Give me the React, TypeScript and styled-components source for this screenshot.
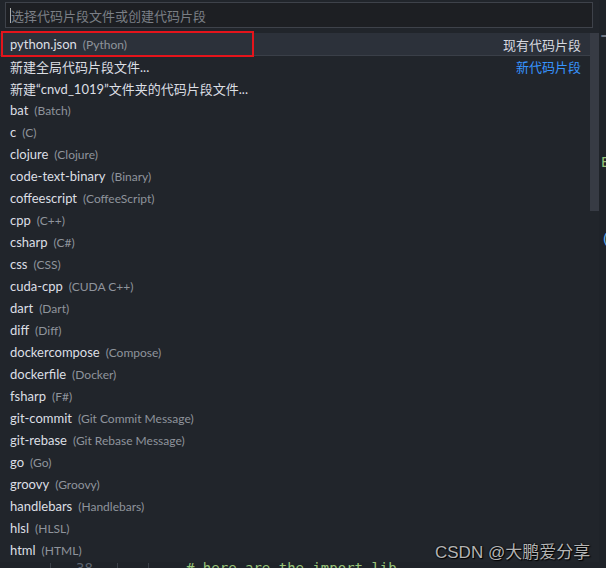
import React from "react";
import styled, { createGlobalStyle } from "styled-components";

const Global = createGlobalStyle`
  html, body { margin: 0; padding: 0; background: #1f2329; overflow: hidden; }
  #root { width: 606px; height: 568px; }
`;

const FONT = `"Segoe UI", Lato, "Noto Sans CJK SC", sans-serif`;

const Page = styled.div`
  position: relative;
  width: 606px;
  height: 568px;
  background: #1f2329;
  overflow: hidden;
  font-family: ${FONT};
`;

const Editor = styled.div`
  position: absolute;
  inset: 0;
  font-family: "DejaVu Sans Mono", monospace;
  font-size: 14px;
`;

const Frag = styled.span<{ $c: string }>`
  position: absolute;
  color: ${(p) => p.$c};
  white-space: pre;
`;

const Guide = styled.span`
  position: absolute;
  top: 563px;
  width: 1px;
  height: 6px;
  background: #3b4048;
`;

const Panel = styled.div`
  position: absolute;
  left: 0;
  top: 0;
  width: 599px;
  height: 562px;
  background: #21252b;
  display: flex;
  flex-direction: column;
  box-sizing: border-box;
  padding-top: 2px;
`;

const InputBox = styled.div`
  margin: 0 6px 0 5px;
  height: 26px;
  box-sizing: border-box;
  border: 1px solid #3e424a;
  background: #1d1f23;
  display: flex;
  align-items: center;
  padding-left: 4px;
  color: #7b7f86;
  font-size: 13px;
  font-family: "Noto Sans CJK SC", sans-serif;
`;

const Caret = styled.span`
  width: 1px;
  height: 15px;
  background: #aeafad;
`;

const ListArea = styled.div`
  margin-top: 5px;
  display: flex;
  flex: 1;
  min-height: 0;
`;

const Rows = styled.div`
  width: 590px;
  display: flex;
  flex-direction: column;
`;

const Row = styled.div<{ $active?: boolean; $sep?: boolean }>`
  height: 22px;
  flex: none;
  display: flex;
  align-items: center;
  padding: 0 9px 0 10px;
  box-sizing: border-box;
  background: ${(p) => (p.$active ? "#2c313a" : "transparent")};
  box-shadow: ${(p) => (p.$sep ? "inset 0 1px 0 #3a3f48" : "none")};
  font-size: 13px;
  color: #d7dae0;
  white-space: nowrap;
`;

const Label = styled.span`
  color: #dcdfe4;
`;

const Desc = styled.span`
  margin-left: 6px;
  font-size: 12px;
  color: #8f949c;
`;

const Tag = styled.span<{ $blue?: boolean }>`
  margin-left: auto;
  font-family: "Noto Sans CJK SC", sans-serif;
  font-size: 13px;
  color: ${(p) => (p.$blue ? "#3794ff" : "#d7dae0")};
`;

const Track = styled.div`
  width: 9px;
  display: flex;
  flex-direction: column;
`;

const Thumb = styled.div`
  height: 178px;
  background: #373b44;
`;

const RedBox = styled.div`
  position: absolute;
  left: 1px;
  top: 31px;
  width: 253px;
  height: 26px;
  box-sizing: border-box;
  border: 2px solid #e5141b;
  pointer-events: none;
`;

const Watermark = styled.div`
  position: absolute;
  left: 435px;
  top: 538px;
  font-family: "Liberation Sans", "Noto Sans CJK SC", sans-serif;
  font-size: 17px;
  color: #b4b4b4;
  text-shadow: 0 0 2px #000, 1px 1px 1px #000;
`;

const langs: [string, string][] = [
  ["bat", "Batch"],
  ["c", "C"],
  ["clojure", "Clojure"],
  ["code-text-binary", "Binary"],
  ["coffeescript", "CoffeeScript"],
  ["cpp", "C++"],
  ["csharp", "C#"],
  ["css", "CSS"],
  ["cuda-cpp", "CUDA C++"],
  ["dart", "Dart"],
  ["diff", "Diff"],
  ["dockercompose", "Compose"],
  ["dockerfile", "Docker"],
  ["fsharp", "F#"],
  ["git-commit", "Git Commit Message"],
  ["git-rebase", "Git Rebase Message"],
  ["go", "Go"],
  ["groovy", "Groovy"],
  ["handlebars", "Handlebars"],
  ["hlsl", "HLSL"],
  ["html", "HTML"],
];

export default function App() {
  return (
    <Page>
      <Global />
      <Editor>
        <Frag $c="#abb2bf" style={{ left: 601, top: 33 }}>下</Frag>
        <Frag $c="#98c379" style={{ left: 601, top: 154 }}>E</Frag>
        <Frag $c="#61afef" style={{ left: 601, top: 231 }}>(</Frag>
        <Guide style={{ left: 50 }} />
        <Guide style={{ left: 117 }} />
        <Guide style={{ left: 148 }} />
        <Frag $c="#5c6370" style={{ left: 76, top: 560 }}>38</Frag>
        <Frag $c="#98c379" style={{ left: 186, top: 560 }}># here are the import lib</Frag>
      </Editor>
      <Panel>
        <InputBox>
          <Caret />
          选择代码片段文件或创建代码片段
        </InputBox>
        <ListArea>
          <Rows>
            <Row $active>
              <Label>python.json</Label>
              <Desc>(Python)</Desc>
              <Tag>现有代码片段</Tag>
            </Row>
            <Row $sep>
              <Label>新建全局代码片段文件...</Label>
              <Tag $blue>新代码片段</Tag>
            </Row>
            <Row>
              <Label>新建“cnvd_1019”文件夹的代码片段文件...</Label>
            </Row>
            {langs.map(([id, name]) => (
              <Row key={id}>
                <Label>{id}</Label>
                <Desc>({name})</Desc>
              </Row>
            ))}
          </Rows>
          <Track>
            <Thumb />
          </Track>
        </ListArea>
      </Panel>
      <RedBox />
      <Watermark>CSDN @大鹏爱分享</Watermark>
    </Page>
  );
}
